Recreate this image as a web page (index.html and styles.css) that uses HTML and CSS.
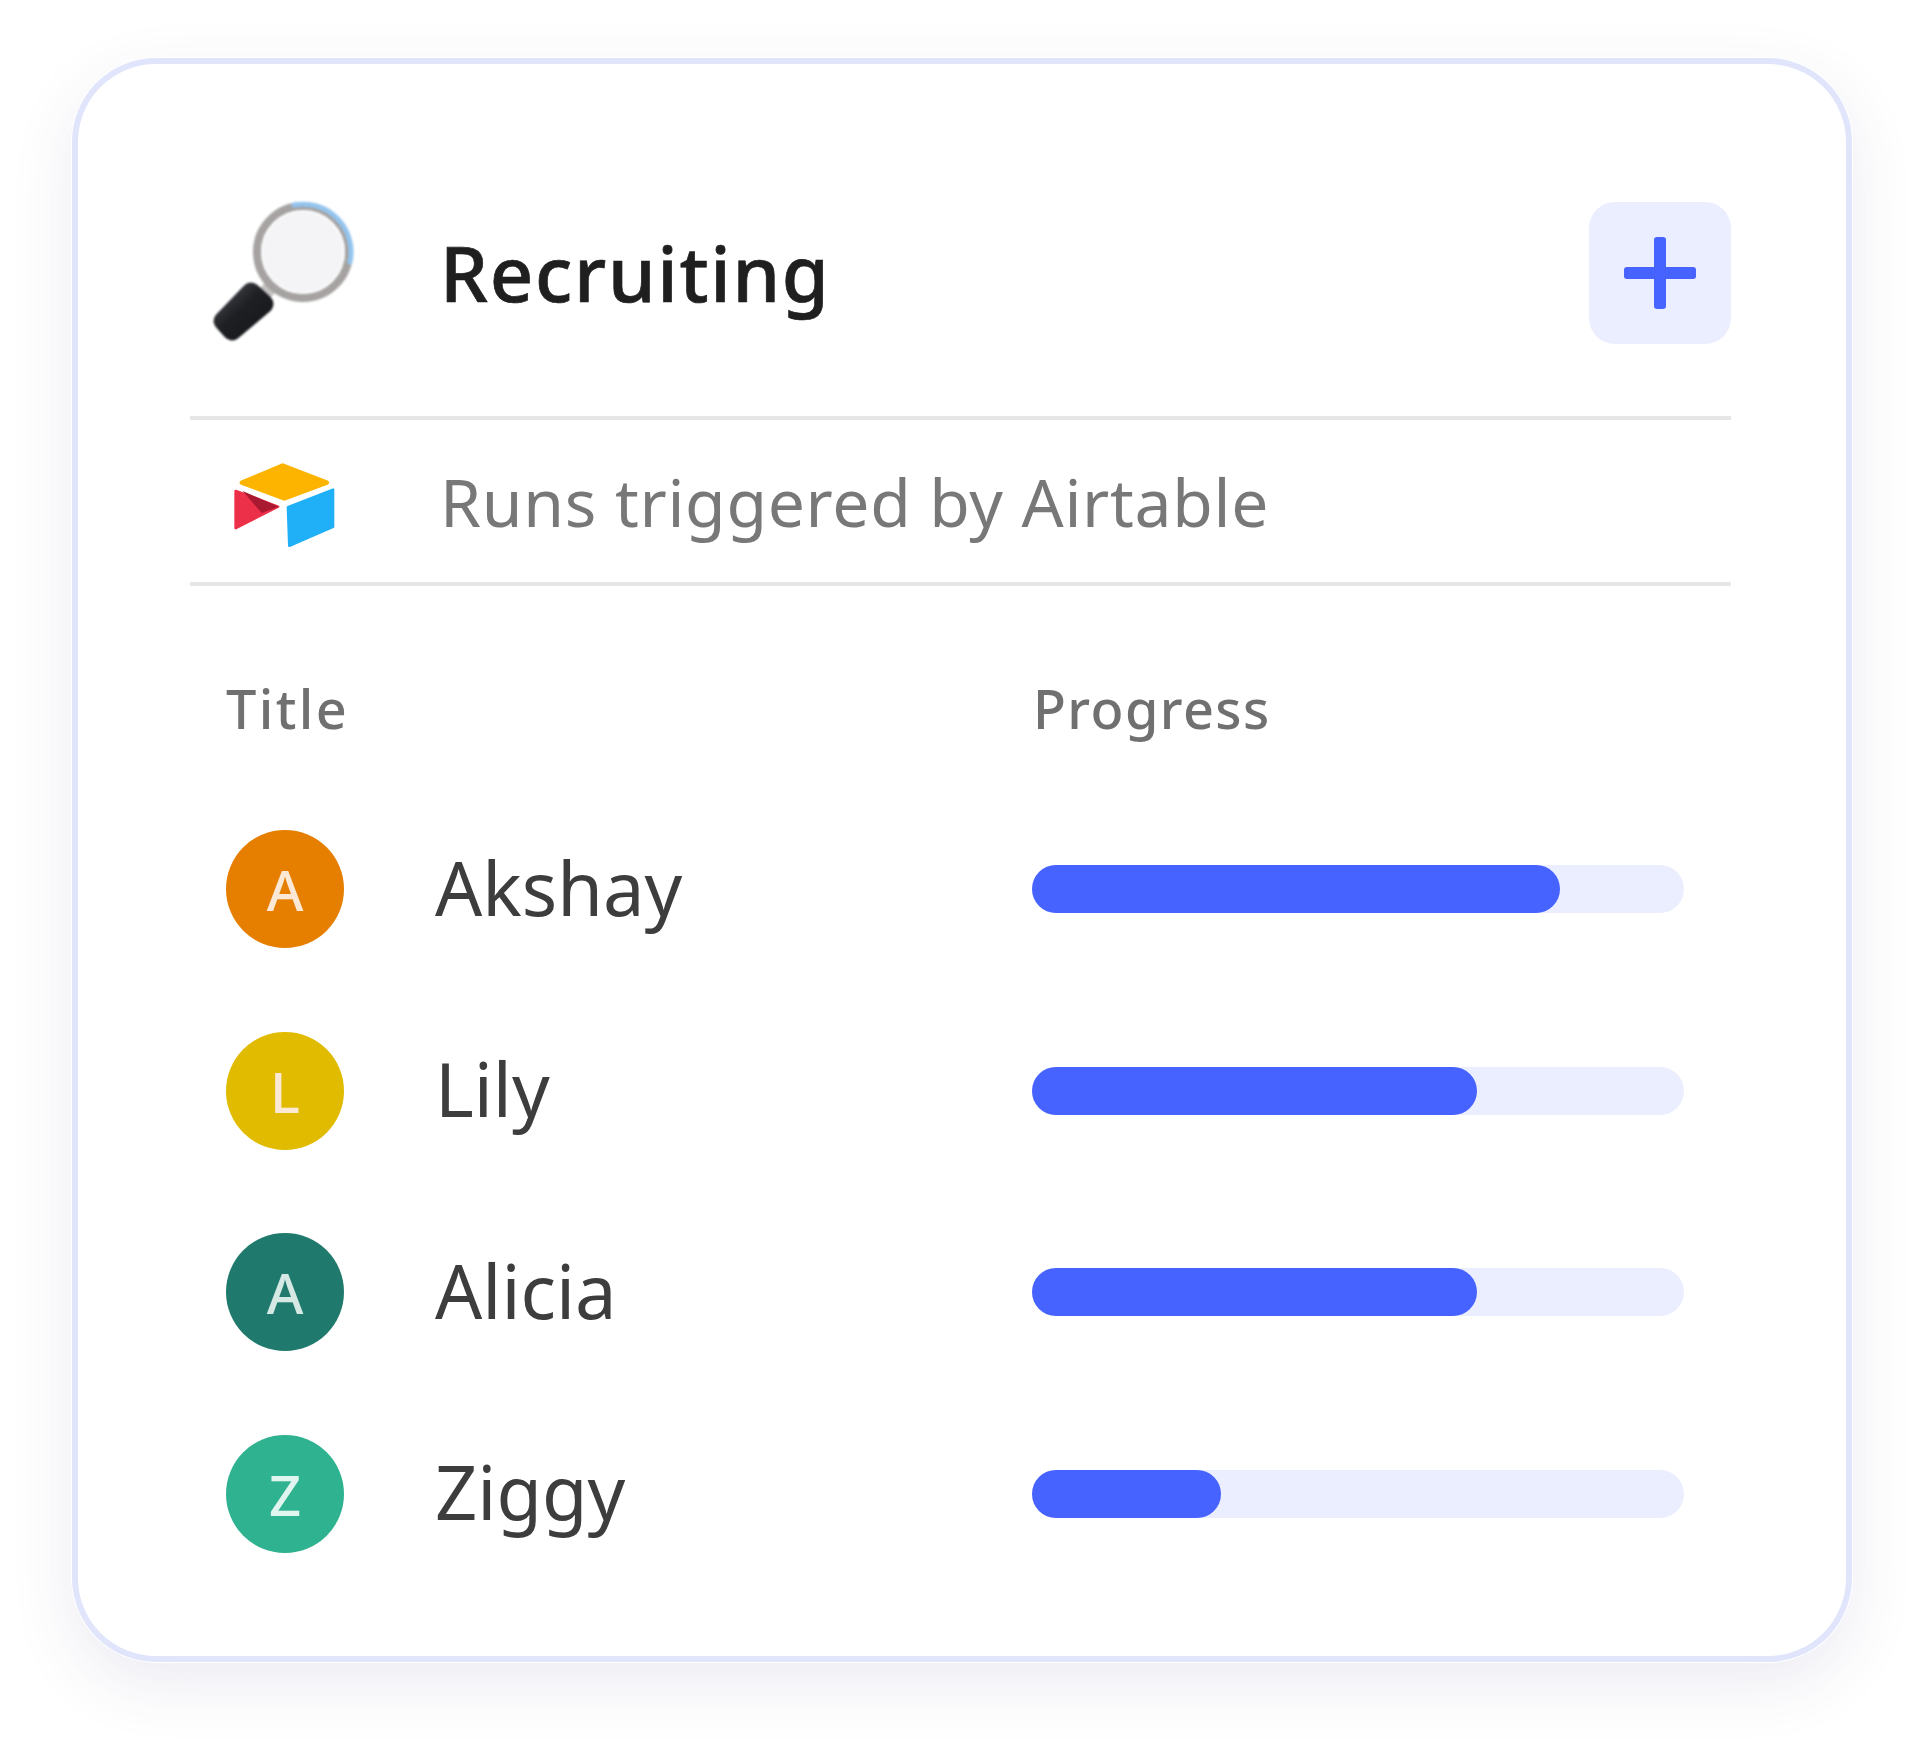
FILE: index.html
```html
<!DOCTYPE html>
<html lang="en">
<head>
    <meta charset="UTF-8">
    <meta name="viewport" content="width=device-width, initial-scale=1.0">
    <title>Recruiting</title>
    <link rel="stylesheet" href="styles.css">
</head>
<body>
    <div class="card">
        <div class="card-header">
            <div class="icon-cell">
                <svg class="magnifier" width="150" height="150" viewBox="0 0 150 150">
                    <defs>
                        <linearGradient id="handle" x1="0" y1="0" x2="1" y2="1">
                            <stop offset="0" stop-color="#3f4247"/>
                            <stop offset="0.45" stop-color="#1d1f23"/>
                            <stop offset="1" stop-color="#17181b"/>
                        </linearGradient>
                    </defs>
                    <path d="M52 90 L62 100" stroke="#c4c2c1" stroke-width="14"/>
                    <path d="M41 96 L54 108 L22 135 L13 125 Z" fill="url(#handle)" stroke="url(#handle)" stroke-width="19" stroke-linejoin="round"/>
                    <circle cx="93" cy="56" r="46" fill="#f4f4f6" stroke="#a5a2a1" stroke-width="8"/>
                    <path d="M84 9 A48 48 0 0 1 140 66" fill="none" stroke="#93c4ee" stroke-width="5" stroke-linecap="round"/>
                    <circle cx="93" cy="56" r="41" fill="none" stroke="#fbfbfb" stroke-width="2"/>
                </svg>
            </div>
            <h1 class="card-title">Recruiting</h1>
            <div class="add-button">
                <svg width="72" height="72" viewBox="0 0 72 72">
                    <rect x="30" y="0" width="12" height="72" rx="3" fill="#4662ff"/>
                    <rect x="0" y="30" width="72" height="12" rx="3" fill="#4662ff"/>
                </svg>
            </div>
        </div>
        <div class="trigger-row">
            <div class="icon-cell">
                <svg class="airtable" width="102" height="86" viewBox="104 66 306 258">
                    <path d="M128 125 L250 74 L382 125 L255 172 Z" fill="#fcb400" stroke="#fcb400" stroke-width="14" stroke-linejoin="round"/>
                    <path d="M266 199 L401 146 V257 L270 314 Z" fill="#20b0f8" stroke="#20b0f8" stroke-width="8" stroke-linejoin="round"/>
                    <path d="M109 150 L236 197 L109 261 Z" fill="#ed3049" stroke="#ed3049" stroke-width="8" stroke-linejoin="round"/>
                    <path d="M130 150 L238 197 L187 216 Z" fill="#a9192f"/>
                </svg>
            </div>
            <span class="trigger-text">Runs triggered by Airtable</span>
        </div>
        <div class="list">
            <div class="list-head">
                <span class="head-title">Title</span>
                <span class="head-progress">Progress</span>
            </div>
            <div class="list-row">
                <div class="person">
                    <span class="avatar orange">A</span>
                    <span class="name">Akshay</span>
                </div>
                <div class="track"><div class="fill" style="width: 81%"></div></div>
            </div>
            <div class="list-row">
                <div class="person">
                    <span class="avatar yellow">L</span>
                    <span class="name">Lily</span>
                </div>
                <div class="track"><div class="fill" style="width: 68.3%"></div></div>
            </div>
            <div class="list-row">
                <div class="person">
                    <span class="avatar teal">A</span>
                    <span class="name">Alicia</span>
                </div>
                <div class="track"><div class="fill" style="width: 68.3%"></div></div>
            </div>
            <div class="list-row">
                <div class="person">
                    <span class="avatar green">Z</span>
                    <span class="name">Ziggy</span>
                </div>
                <div class="track"><div class="fill" style="width: 29%"></div></div>
            </div>
        </div>
    </div>
</body>
</html>
```

FILE: styles.css
```css
body {
    margin: 0;
    padding: 58px 68px 80px 72px;
    background: #fff;
    font-family: "Noto Sans", "Open Sans", sans-serif;
}
.card {
    box-sizing: border-box;
    width: 1780px;
    height: 1604px;
    padding: 138px 115px 0 112px;
    background: #fff;
    border: 6px solid #e1e5fc;
    border-radius: 84px;
    box-shadow: 0 0 0 1px #fff, 0 22px 64px rgba(70, 60, 130, 0.1);
}
.card-header {
    display: flex;
    align-items: center;
    height: 142px;
    padding-bottom: 72px;
    border-bottom: 4px solid #e6e6e6;
}
.icon-cell {
    display: flex;
    justify-content: center;
    width: 190px;
    margin-right: 60px;
}
.magnifier {
    margin: -8px 0 -4px;
    filter: blur(0.8px);
}
.airtable {
    margin-top: 10px;
    filter: blur(0.4px);
}
.card-title {
    flex: 1;
    margin: 0;
    font-size: 76px;
    font-weight: 500;
    line-height: 138px;
    letter-spacing: 1.7px;
    -webkit-text-stroke: 0.7px #1f1f1f;
    color: #1f1f1f;
}
.add-button {
    display: flex;
    justify-content: center;
    align-items: center;
    width: 142px;
    height: 142px;
    background: #ebeefe;
    border-radius: 26px;
}
.trigger-row {
    display: flex;
    align-items: center;
    height: 162px;
    border-bottom: 4px solid #e6e6e6;
}
.trigger-text {
    font-size: 66px;
    letter-spacing: 0.7px;
    color: #787878;
}
.list {
    padding: 92px 0 0 36px;
}
.list-head {
    display: flex;
    align-items: center;
    height: 60px;
    margin-bottom: 92px;
    font-size: 54px;
    font-weight: 500;
    letter-spacing: 1.4px;
    color: #707070;
}
.head-title {
    width: 807px;
    letter-spacing: 2.4px;
}
.list-row {
    display: flex;
    align-items: center;
    height: 118px;
    margin-bottom: 83.6px;
}
.person {
    display: flex;
    align-items: center;
    width: 806px;
}
.avatar {
    display: flex;
    justify-content: center;
    align-items: center;
    width: 118px;
    height: 118px;
    margin-right: 91px;
    border-radius: 50%;
    font-size: 56px;
    font-weight: 500;
    color: #fbe9d6;
}
.avatar.orange {
    background-color: #e67e00;
}
.avatar.yellow {
    background-color: #e0bb00;
}
.avatar.teal {
    background-color: #1f7a6d;
    color: #d5e8e4;
}
.avatar.green {
    background-color: #2fb28f;
    color: #e0f5ef;
}
.name {
    margin-top: -4px;
    font-size: 74px;
    color: #3d3d3d;
}
.track {
    width: 652px;
    height: 48px;
    background: #ebeefe;
    border-radius: 24px;
}
.fill {
    height: 100%;
    background: #4662ff;
    border-radius: 24px;
}
```
